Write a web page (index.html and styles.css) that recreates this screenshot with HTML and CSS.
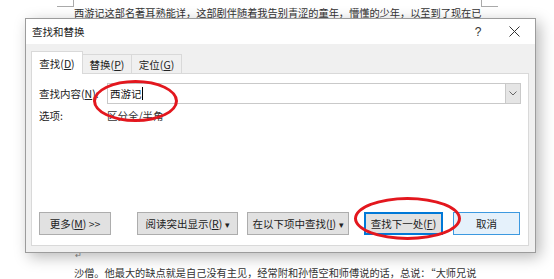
FILE: index.html
```html
<!DOCTYPE html>
<html lang="zh-CN">
  <head>
    <meta charset="UTF-8" />
    <title>查找和替换</title>
    <link rel="stylesheet" href="styles.css">
  </head>
  <body>
    <div class="doc">
      <div class="doc-line">西游记这部名著耳熟能详，这部剧伴随着我告别青涩的童年，懵懂的少年，以至到了现在已</div>
      <div class="doc-bottom">
        <div class="para-mark">↵</div>
        <div class="doc-line">沙僧。他最大的缺点就是自己没有主见，经常附和孙悟空和师傅说的话，总说：“大师兄说</div>
      </div>
    </div>
    <div class="corner corner-left"></div>
    <div class="corner corner-right"></div>

    <div class="dialog">
      <div class="titlebar">
        <span class="title">查找和替换</span>
        <span class="help">?</span>
        <span class="close">
          <svg width="11" height="11" viewBox="0 0 11 11"><path d="M0.5 0.5 L10.5 10.5 M10.5 0.5 L0.5 10.5" stroke="#333" stroke-width="1" fill="none"/></svg>
        </span>
      </div>
      <div class="dialog-body">
        <div class="tabs">
          <div class="tab active" style="width: 52px">查找(<u>D</u>)</div>
          <div class="tab" style="width: 50px">替换(<u>P</u>)</div>
          <div class="tab" style="width: 51px">定位(<u>G</u>)</div>
        </div>
        <div class="panel">
          <div class="field-row">
            <label class="label">查找内容(<u>N</u>):</label>
            <div class="combo">
              <span class="combo-text">西游记<span class="caret"></span></span>
              <span class="combo-btn">
                <svg width="8" height="5" viewBox="0 0 8 5"><path d="M0.5 0.5 L4 4 L7.5 0.5" stroke="#666" stroke-width="1" fill="none"/></svg>
              </span>
            </div>
          </div>
          <div class="option-row">
            <span class="label">选项:</span>
            <span class="option-value">区分全/半角</span>
          </div>
          <div class="button-row">
            <button class="btn" style="width: 72px">更多(<u>M</u>) &gt;&gt;</button>
            <button class="btn gap-lg" style="width: 101px">阅读突出显示(<u>R</u>) <span class="arrow">▾</span></button>
            <button class="btn gap-sm" style="width: 102px">在以下项中查找(<u>I</u>) <span class="arrow">▾</span></button>
            <button class="btn btn-default gap-md" style="width: 79px">查找下一处(<u>F</u>)</button>
            <button class="btn btn-hover gap-sm2" style="width: 67px">取消</button>
          </div>
        </div>
      </div>
    </div>

    <div class="mark mark-input"></div>
    <div class="mark mark-next"></div>
  </body>
</html>
```

FILE: styles.css
```css
body {
  margin: 0;
  width: 554px;
  height: 279px;
  overflow: hidden;
  background: #fff;
  font-family: "Noto Sans CJK SC", "Liberation Sans", sans-serif;
  position: relative;
  color: #222;
}

.doc {
  height: 279px;
  box-sizing: border-box;
  padding: 6px 0 0 74px;
  display: flex;
  flex-direction: column;
  justify-content: space-between;
}

.doc-line {
  font-size: 10.2px;
  line-height: 14px;
  color: #333;
  white-space: nowrap;
}

.doc-bottom {
  margin-bottom: -1px;
}

.para-mark {
  font-size: 8px;
  line-height: 10px;
  color: #888;
  padding-left: 1px;
  margin-bottom: 6px;
}

.corner {
  position: absolute;
  top: 0;
  width: 16px;
  height: 6px;
}

.corner-left {
  left: 57px;
  border-right: 1px solid #aaa;
  border-bottom: 1px solid #aaa;
}

.corner-right {
  left: 481px;
  border-left: 1px solid #aaa;
  border-bottom: 1px solid #aaa;
}

/* dialog window */
.dialog {
  position: absolute;
  left: 25px;
  top: 18px;
  width: 511px;
  height: 235px;
  box-sizing: border-box;
  border: 1px solid #9c9c9c;
  background: #f0f0f0;
  box-shadow: 4px 4px 14px rgba(0, 0, 0, 0.28);
  display: flex;
  flex-direction: column;
  font-size: 10.5px;
}

.titlebar {
  height: 25px;
  background: #fff;
  display: flex;
  align-items: center;
  padding-left: 6px;
}

.title {
  flex: 1;
  color: #222;
  font-size: 10.5px;
}

.help {
  width: 16px;
  text-align: center;
  color: #333;
  margin-right: 23px;
  font-size: 12px;
  font-family: "Liberation Sans", sans-serif;
}

.close {
  width: 11px;
  height: 11px;
  margin-right: 15px;
  display: flex;
}

.dialog-body {
  flex: 1;
  display: flex;
  flex-direction: column;
  padding: 7px 6px 6px 5px;
}

.tabs {
  display: flex;
  align-items: flex-end;
  height: 22px;
  position: relative;
  z-index: 1;
}

.tab {
  height: 19px;
  box-sizing: border-box;
  border: 1px solid #d9d9d9;
  border-bottom: none;
  background: #f0f0f0;
  display: flex;
  align-items: center;
  justify-content: center;
  font-size: 10.5px;
  color: #222;
  margin-right: -1px;
}

.tab.active {
  height: 23px;
  background: #fff;
  margin-bottom: -1px;
}

.panel {
  flex: 1;
  background: #fff;
  border: 1px solid #d9d9d9;
  display: flex;
  flex-direction: column;
  padding: 9px 7px 10px 7px;
}

.field-row {
  display: flex;
  align-items: center;
}

.label {
  flex: none;
  width: 68px;
  font-size: 10.5px;
  color: #222;
}

.combo {
  flex: 1;
  height: 21px;
  box-sizing: border-box;
  border: 1px solid #c9c9c9;
  display: flex;
  align-items: center;
}

.combo-text {
  flex: 1;
  padding-left: 2px;
  font-size: 10.5px;
  color: #111;
  display: flex;
  align-items: center;
}

.caret {
  width: 1px;
  height: 13px;
  background: #000;
}

.combo-btn {
  width: 15px;
  height: 19px;
  box-sizing: border-box;
  border-left: 1px solid #c9c9c9;
  background: #e5e5e5;
  display: flex;
  align-items: center;
  justify-content: center;
}

.option-row {
  display: flex;
  align-items: center;
  margin-top: 3px;
  height: 16px;
}

.option-value {
  font-size: 10.5px;
  color: #333;
}

.button-row {
  margin-top: auto;
  display: flex;
}

.btn {
  flex: none;
  height: 23px;
  box-sizing: border-box;
  border: 1px solid #adadad;
  background: #e1e1e1;
  font-family: inherit;
  font-size: 10.5px;
  color: #222;
  padding: 0;
  white-space: nowrap;
}

.arrow {
  font-size: 9px;
}

.gap-lg {
  margin-left: 26px;
}

.gap-sm {
  margin-left: 9px;
}

.gap-md {
  margin-left: 15px;
}

.gap-sm2 {
  margin-left: 10px;
}

.btn-default {
  border: 2px solid #0078d7;
  box-shadow: inset 0 0 0 1px #e1e1e1;
}

.btn-hover {
  background: #e5f1fb;
  border-color: #3c99e0;
}

/* red annotation rings */
.mark {
  position: absolute;
  border: 3px solid #e3171e;
  border-radius: 50%;
  box-sizing: border-box;
}

.mark-input {
  left: 93px;
  top: 80px;
  width: 85px;
  height: 42px;
}

.mark-next {
  left: 354px;
  top: 197px;
  width: 107px;
  height: 43px;
}
```
